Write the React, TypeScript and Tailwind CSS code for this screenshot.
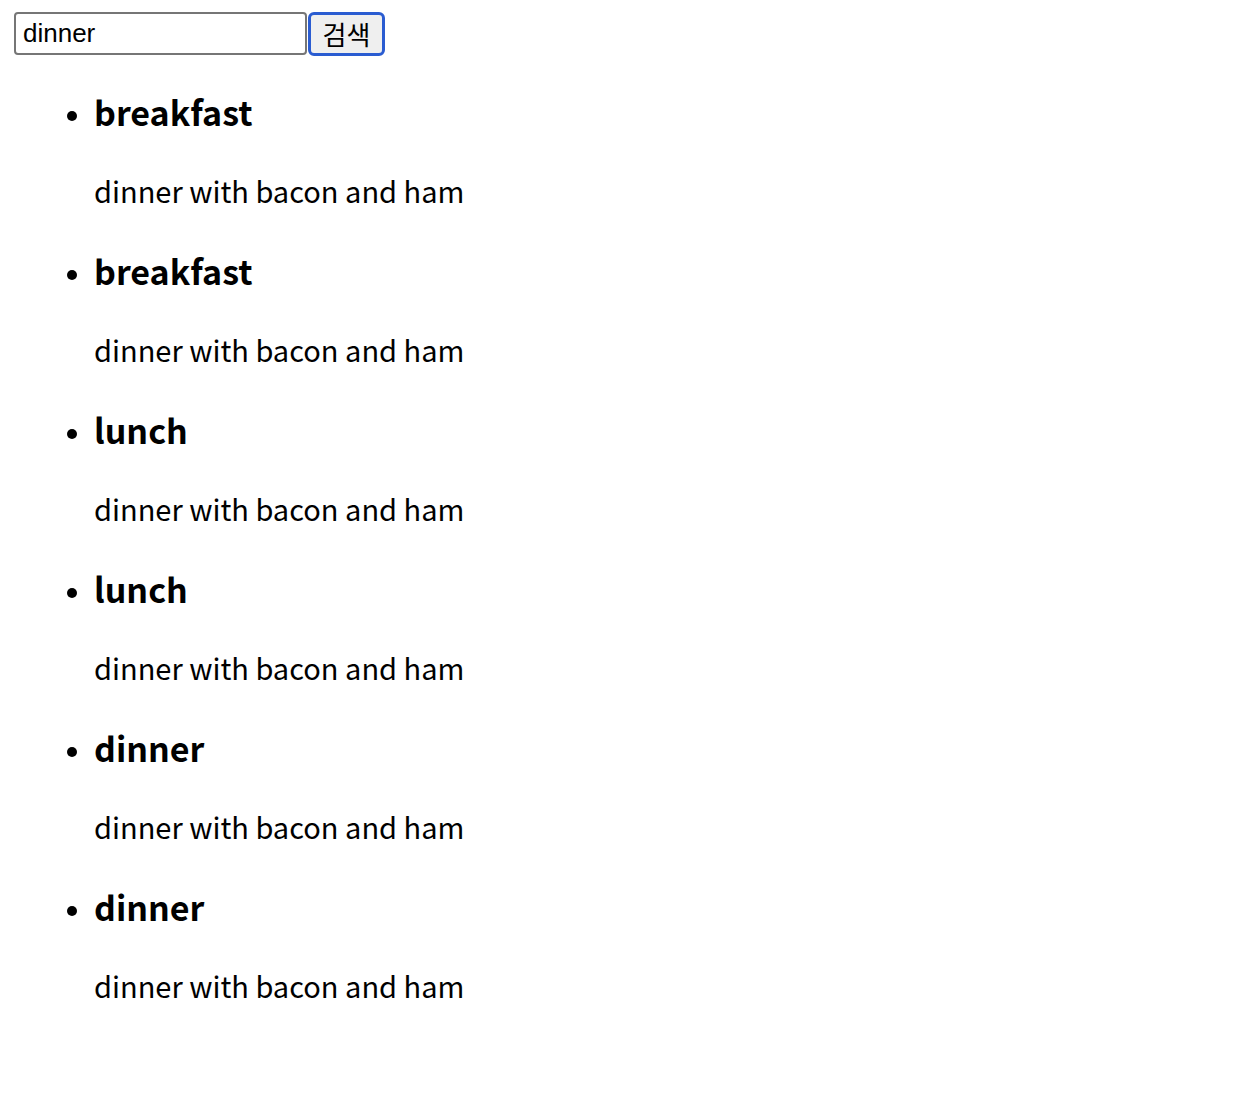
import { useState } from "react";

const meals = [
  { title: "breakfast", desc: "dinner with bacon and ham" },
  { title: "breakfast", desc: "dinner with bacon and ham" },
  { title: "lunch", desc: "dinner with bacon and ham" },
  { title: "lunch", desc: "dinner with bacon and ham" },
  { title: "dinner", desc: "dinner with bacon and ham" },
  { title: "dinner", desc: "dinner with bacon and ham" },
];

const korean = "font-['Noto_Sans_CJK_KR','Noto_Sans',sans-serif]";

export default function App() {
  const [query, setQuery] = useState("dinner");

  return (
    <div className="min-h-[1102px] bg-white px-[14px] pt-[12px] text-black">
      <form className="flex h-[44px] items-stretch" onSubmit={(e) => e.preventDefault()}>
        <input
          value={query}
          onChange={(e) => setQuery(e.target.value)}
          className="h-[43px] w-[293px] rounded-[4px] border-2 border-[#767676] bg-white px-[7px] font-['Liberation_Sans',Arial,sans-serif] text-[26px] leading-none text-black outline-none"
        />
        <button
          type="submit"
          className={`ml-[1px] flex h-[44px] w-[77px] items-center justify-center rounded-[6px] border-[3px] border-[#2a5cd1] bg-[#efefef] text-[26px] leading-none text-black ${korean}`}
        >
          검색
        </button>
      </form>

      <ul className={`mt-[34px] list-disc pl-[80px] ${korean}`}>
        {meals.map((m, i) => (
          <li key={i} className="marker:text-[26px]">
            <h3 className="text-[34px] leading-[44px] font-bold">{m.title}</h3>
            <p className="mt-[36px] mb-[39px] text-[29px] leading-[40px]">{m.desc}</p>
          </li>
        ))}
      </ul>
    </div>
  );
}
